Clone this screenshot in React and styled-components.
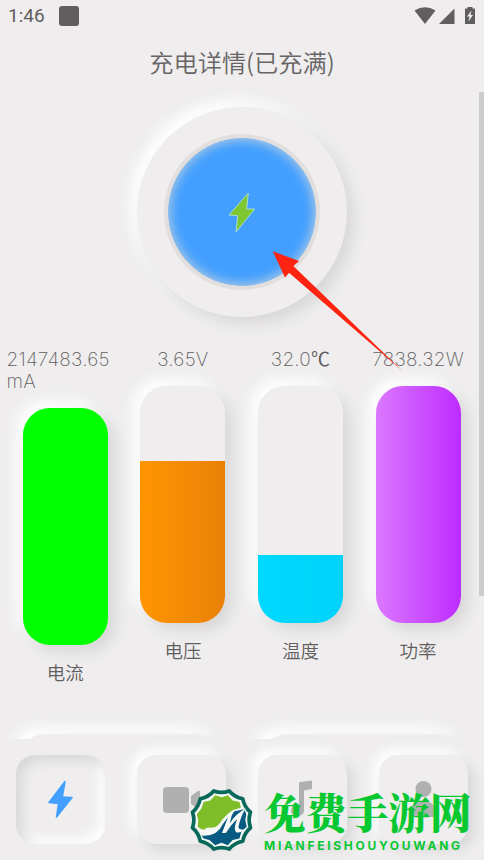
import React from 'react';
import styled, { createGlobalStyle } from 'styled-components';

const GlobalStyle = createGlobalStyle`
  * {
    box-sizing: border-box;
  }
  body {
    margin: 0;
    background: #efedee;
    color: #5f5d5e;
    font-family: Roboto, 'Noto Sans CJK SC', sans-serif;
  }
`;

const Screen = styled.div`
  position: relative;
  display: flex;
  flex-direction: column;
  width: 484px;
  height: 860px;
  overflow: hidden;
  background: #efedee;
`;

const StatusBar = styled.div`
  display: flex;
  align-items: center;
  justify-content: space-between;
  height: 32px;
  padding: 0 8px;
  flex: none;
`;

const Clock = styled.div`
  display: flex;
  align-items: center;
  font-size: 19px;
  font-weight: 450;
  line-height: 34px;
  span {
    width: 51px;
  }
`;

const AppBadge = styled.div`
  width: 20px;
  height: 20px;
  border-radius: 3px;
  background: #605e5f;
`;

const Title = styled.h1`
  margin: 0;
  height: 60px;
  flex: none;
  font-family: 'Noto Sans CJK SC', sans-serif;
  font-size: 24.2px;
  font-weight: 350;
  line-height: 59px;
  text-align: center;
  color: #666465;
`;

const Content = styled.main`
  height: 647px;
  flex: none;
  overflow: hidden;
`;

const Dial = styled.div`
  display: flex;
  align-items: center;
  justify-content: center;
  width: 210px;
  height: 210px;
  margin: 15px auto 0;
  border-radius: 50%;
  background: #efedee;
  box-shadow: 7px 7px 14px #d9d7d8, -7px -7px 14px #fff;
`;

const DialCore = styled.div`
  display: flex;
  align-items: center;
  justify-content: center;
  width: 156px;
  height: 156px;
  border: 4px solid #e1dedd;
  border-radius: 50%;
  background: #429fff;
  background-clip: padding-box;
  box-shadow: inset 0 0 11px 2px #b4cbe0;
`;

const Meters = styled.div`
  display: grid;
  grid-template-columns: repeat(4, 117.6px);
  align-items: start;
  padding: 31px 0 0 6.5px;
`;

const Meter = styled.div`
  display: flex;
  flex-direction: column;
  align-items: center;
`;

const Value = styled.div`
  align-self: ${(p) => (p.$wrapped ? 'stretch' : 'center')};
  padding-top: 1px;
  font-family: Inter, 'Noto Sans CJK SC', sans-serif;
  font-size: 19px;
  font-weight: 200;
  line-height: 22px;
  letter-spacing: 0.25px;
  white-space: pre;
`;

const Unit = styled.span`
  font-family: 'Noto Sans CJK SC', sans-serif;
  font-weight: 400;
  line-height: 0;
  letter-spacing: 0;
`;

const Tube = styled.div`
  width: 85px;
  height: 237px;
  margin-top: 15px;
  border-radius: 27px;
  box-shadow: 7px 7px 14px #d9d7d8, -7px -7px 14px #fff;
`;

const TubeInner = styled.div`
  display: flex;
  align-items: flex-end;
  width: 100%;
  height: 100%;
  border-radius: 27px;
  overflow: hidden;
  background: #efedee;
`;

const Fill = styled.div`
  width: 100%;
  height: ${(p) => p.$height}px;
  background: ${(p) => p.$color};
`;

const Label = styled.div`
  margin-top: 13px;
  font-family: 'Noto Sans CJK SC', sans-serif;
  font-size: 18.5px;
  font-weight: 350;
  line-height: 28px;
`;

const Cards = styled.div`
  display: grid;
  grid-template-columns: repeat(2, 210px);
  gap: 32px;
  padding: 48px 0 0 16px;
`;

const Card = styled.div`
  height: 90px;
  border-radius: 30px;
  background: #efedee;
  box-shadow: 7px 7px 14px #d9d7d8, -7px -7px 14px #fff;
`;

const Nav = styled.nav`
  display: flex;
  gap: 32px;
  height: 121px;
  padding: 16px;
  flex: none;
  background: #efedee;
`;

const NavItem = styled.div`
  width: 89px;
  height: 89px;
  border-radius: 19px;
  background: #efedee;
  box-shadow: ${(p) =>
    p.$active
      ? 'inset 6px 6px 12px #d9d7d8, inset -6px -6px 12px #fff'
      : '6px 6px 12px #d9d7d8, -6px -6px 12px #fff'};
  svg {
    display: block;
  }
`;

const Scrollbar = styled.div`
  position: absolute;
  top: 92px;
  right: 0;
  width: 5px;
  height: 504px;
  background: #cdcccc;
`;

const Pointer = styled.svg`
  position: absolute;
  top: 245px;
  left: 267px;
`;

const Watermark = styled.div`
  position: absolute;
  left: 188px;
  top: 787px;
  display: flex;
  gap: 9px;
`;

const Brand = styled.div`
  color: #08c832;
  white-space: nowrap;
  strong {
    display: block;
    height: 52px;
    font-family: 'Noto Serif CJK SC', 'Noto Sans CJK SC', sans-serif;
    font-size: 41.5px;
    font-weight: 900;
    line-height: 48px;
  }
  small {
    display: block;
    font-family: Inter, sans-serif;
    font-size: 12px;
    font-weight: 650;
    line-height: 14px;
    letter-spacing: 2.7px;
  }
`;

const meters = [
  { value: '2147483.65\nmA', wrapped: true, label: '电流', height: 237, color: '#00ff00' },
  { value: '3.65V', label: '电压', height: 162, color: 'linear-gradient(90deg, #ff9500, #e98108)' },
  { value: '32.0', unit: '℃', label: '温度', height: 68, color: 'linear-gradient(90deg, #00d9ff, #00d2fa)' },
  { value: '7838.32W', label: '功率', height: 237, color: 'linear-gradient(90deg, #db78ff, #bd2cff)' },
];

const StatusIcons = () => (
  <svg width='64' height='20' viewBox='412 6 64 20' fill='#605e5f'>
    <path d='M414.500 10.500Q425 4 435.500 10.500L425 24Z' />
    <path d='M439 24L454.500 8.500V24Z' />
    <path d='M465 8.500h2.500V7h5v1.500h2.500V24h-10z' />
    <path d='M471.500 10.500l-4.500 6h2.500l-1 5 4.500-6.500h-2.500z' fill='#efedee' />
  </svg>
);

const navIcons = [
  <path
    key='charge'
    d='M49 26.500L46.300 42L56 42.500L40.500 62L42.500 48.500L33 47.500Z'
    fill='#429fff'
    stroke='#429fff'
    strokeWidth='1.500'
    strokeLinejoin='round'
  />,
  <g key='video' fill='#b1b0b0'>
    <rect x='26' y='32' width='26' height='26' rx='4' />
    <path d='M54 41L61 36Q63 35 63 37V53Q63 55 61 54L54 49Z' />
  </g>,
  <g key='music' fill='#b1b0b0'>
    <path d='M41 28Q41 27 42 27L54 25.500V34L46 35.500V55H41Z' />
    <ellipse cx='39.500' cy='55.500' rx='6.500' ry='5.500' />
  </g>,
  <g key='user' fill='#b1b0b0'>
    <circle cx='44.500' cy='34' r='8' />
    <path d='M33.500 62V55Q33.500 47 41 47H48Q55.500 47 55.500 55V62Z' />
  </g>,
];

const LogoMark = () => (
  <svg width='67' height='66' viewBox='0 0 67 68'>
    <path
      d='M41.500 4.100Q47 10.600 55.400 12.100Q56.900 20.500 63.400 26Q60.500 34 63.400 42Q56.900 47.500 55.400 55.900Q47 57.400 41.500 63.900Q33.500 61 25.500 63.900Q20 57.400 11.600 55.900Q10.100 47.500 3.600 42Q6.500 34 3.600 26Q10.100 20.500 11.600 12.100Q20 10.600 25.500 4.100Q33.500 7 41.500 4.100Z'
      fill='#f4f7f4'
      stroke='#08685a'
      strokeWidth='3.800'
      strokeLinejoin='round'
    />
    <path
      d='M9 41L9.500 34L8 28L13 22L15 15.500L22 14L27 8.500L34 10.500L40 8.500L45 14L52 15.500L53.500 21Q43 24 37 33Q31 42 22 42Q18 41 16 44Q12 44 9 41Z'
      fill='#7fbe29'
    />
    <path
      d='M13 50Q25 51 32 43Q38 32 47 25L57 23L59 28L58 34L59.500 41L54 46L52 53L45 54.500L40 60L33.500 57.500L27 60L21 54.500L15 53Z'
      fill='#075b82'
    />
    <path
      d='M12 45.500Q24 47 31 38Q38 28 47.500 22.500Q43.500 29 42 37.500Q48 28 58.500 22Q53 31 51 41Q51 44.500 57 43.500Q53 48 48.500 46.500Q45.500 44 49.500 33Q43 39 38 47.500H34L41 29Q31 43 27 47.500Q18 52 12 45.500Z'
      fill='#f7f9f7'
    />
  </svg>
);

const App = () => {
  return (
    <>
      <GlobalStyle />
      <Screen>
        <StatusBar>
          <Clock>
            <span>1:46</span>
            <AppBadge />
          </Clock>
          <StatusIcons />
        </StatusBar>
        <Title>充电详情(已充满)</Title>
        <Content>
          <Dial>
            <DialCore>
              <svg width='30' height='44' viewBox='227 190 30 44'>
                <path
                  d='M248.300 193L246.700 209H254.700L236 232L237.700 215.700L229 215Z'
                  fill='#7dc832'
                  stroke='#aadccb'
                />
              </svg>
            </DialCore>
          </Dial>
          <Meters>
            {meters.map((meter) => (
              <Meter key={meter.label}>
                <Value $wrapped={meter.wrapped}>
                  {meter.value}
                  {meter.unit && <Unit>{meter.unit}</Unit>}
                </Value>
                <Tube>
                  <TubeInner>
                    <Fill $height={meter.height} $color={meter.color} />
                  </TubeInner>
                </Tube>
                <Label>{meter.label}</Label>
              </Meter>
            ))}
          </Meters>
          <Cards>
            <Card />
            <Card />
          </Cards>
        </Content>
        <Nav>
          {navIcons.map((icon, i) => (
            <NavItem key={icon.key} $active={i === 0}>
              <svg width='89' height='89' viewBox='0 0 89 89'>
                {icon}
              </svg>
            </NavItem>
          ))}
        </Nav>
        <Scrollbar />
        <Pointer width='140' height='130' viewBox='267 245 140 130'>
          <path
            d='M272.700 251.300L299 261L293.300 266L402.500 371L289 272.700L285 277.500Z'
            fill='#ff2412'
          />
        </Pointer>
        <Watermark>
          <LogoMark />
          <Brand>
            <strong>免费手游网</strong>
            <small>MIANFEISHOUYOUWANG</small>
          </Brand>
        </Watermark>
      </Screen>
    </>
  );
};

export default App;
